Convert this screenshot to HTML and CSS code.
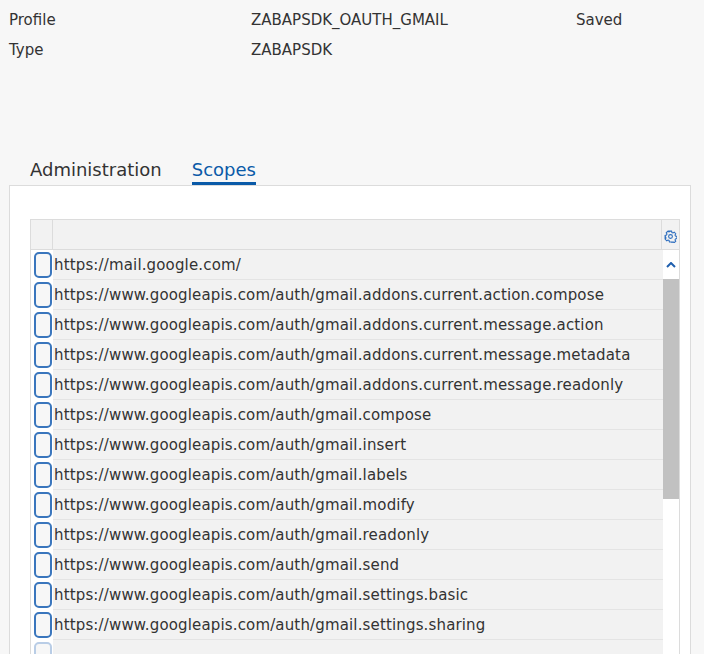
FILE: index.html
```html
<!DOCTYPE html>
<html>
<head>
<meta charset="utf-8">
<link rel="stylesheet" href="styles.css">
</head>
<body>
<div class="top">
  <div class="info">
    <div>Profile</div><div>ZABAPSDK_OAUTH_GMAIL</div><div>Saved</div>
    <div>Type</div><div>ZABAPSDK</div><div></div>
  </div>
</div>
<div class="tabs">
  <div class="tab">Administration</div>
  <div class="tab active">Scopes</div>
</div>
<div class="panel">
  <div class="table">
    <div class="thead">
      <div class="sel-h"></div>
      <div class="col-h"></div>
      <div class="gear-h">
        <svg width="13" height="13" viewBox="0 0 24 24" fill="none" stroke="#2f6fbf" stroke-width="2"><path d="M10 2h4l.6 2.6 2 .9 2.3-1.4 2.8 2.8-1.4 2.3.9 2 2.6.6v4l-2.6.6-.9 2 1.4 2.3-2.8 2.8-2.3-1.4-2 .9L14 22h-4l-.6-2.6-2-.9-2.3 1.4-2.8-2.8 1.4-2.3-.9-2L2 14v-4l2.6-.6.9-2-1.4-2.3 2.8-2.8 2.3 1.4 2-.9z"/><circle cx="12" cy="12" r="3.5"/></svg>
      </div>
    </div>
    <div class="tbody">
      <div class="rows">
        <div class="row"><span class="cb"></span><span class="cell">https://mail.google.com/</span></div>
        <div class="row"><span class="cb"></span><span class="cell">https://www.googleapis.com/auth/gmail.addons.current.action.compose</span></div>
        <div class="row"><span class="cb"></span><span class="cell">https://www.googleapis.com/auth/gmail.addons.current.message.action</span></div>
        <div class="row"><span class="cb"></span><span class="cell">https://www.googleapis.com/auth/gmail.addons.current.message.metadata</span></div>
        <div class="row"><span class="cb"></span><span class="cell">https://www.googleapis.com/auth/gmail.addons.current.message.readonly</span></div>
        <div class="row"><span class="cb"></span><span class="cell">https://www.googleapis.com/auth/gmail.compose</span></div>
        <div class="row"><span class="cb"></span><span class="cell">https://www.googleapis.com/auth/gmail.insert</span></div>
        <div class="row"><span class="cb"></span><span class="cell">https://www.googleapis.com/auth/gmail.labels</span></div>
        <div class="row"><span class="cb"></span><span class="cell">https://www.googleapis.com/auth/gmail.modify</span></div>
        <div class="row"><span class="cb"></span><span class="cell">https://www.googleapis.com/auth/gmail.readonly</span></div>
        <div class="row"><span class="cb"></span><span class="cell">https://www.googleapis.com/auth/gmail.send</span></div>
        <div class="row"><span class="cb"></span><span class="cell">https://www.googleapis.com/auth/gmail.settings.basic</span></div>
        <div class="row"><span class="cb"></span><span class="cell">https://www.googleapis.com/auth/gmail.settings.sharing</span></div>
        <div class="row"><span class="cb faded"></span><span class="cell"></span></div>
      </div>
      <div class="scroll">
        <div class="arrow">
          <svg width="10" height="6" viewBox="0 0 10 6" fill="none" stroke="#1f5fae" stroke-width="2"><path d="M1 5l4-4 4 4"/></svg>
        </div>
        <div class="thumb"></div>
      </div>
    </div>
  </div>
</div>
</body>
</html>
```
FILE: styles.css
```css
html, body {
  margin: 0;
  padding: 0;
  background: #f7f7f7;
  font-family: "DejaVu Sans", sans-serif;
  color: #333;
  overflow: hidden;
  height: 654px;
}
.top {
  padding: 5px 0 0 9px;
  height: 151px;
  box-sizing: border-box;
}
.info {
  display: grid;
  grid-template-columns: 242px 325px auto;
  grid-auto-rows: 30px;
  align-items: center;
  font-size: 15px;
}
.tabs {
  display: flex;
  gap: 30px;
  padding-left: 30px;
  height: 34px;
  box-sizing: border-box;
}
.tab {
  font-size: 18px;
  line-height: 25px;
  padding-top: 6px;
  color: #333;
  height: 34px;
  box-sizing: border-box;
}
.tab.active {
  color: #0a5aa8;
  border-bottom: 3px solid #0a5aa8;
}
.panel {
  margin-left: 9px;
  width: 682px;
  height: 480px;
  box-sizing: border-box;
  background: #fff;
  border: 1px solid #dcdcdc;
  border-bottom: none;
  padding: 33px 0 0 20px;
}
.table {
  width: 650px;
  border: 1px solid #dcdcdc;
  border-bottom: none;
  box-sizing: border-box;
}
.thead {
  display: flex;
  height: 30px;
  background: #f2f2f2;
  border-bottom: 1px solid #dcdcdc;
  box-sizing: border-box;
}
.sel-h {
  width: 21px;
  border-right: 1px solid #dcdcdc;
}
.col-h {
  flex: 1;
  border-right: 1px solid #dcdcdc;
}
.gear-h {
  width: 17px;
  display: flex;
  align-items: center;
  justify-content: center;
  padding-top: 3px;
}
.tbody {
  display: flex;
}
.rows {
  flex: 1;
}
.row {
  display: flex;
  height: 30px;
  align-items: stretch;
}
.cb {
  width: 22px;
  box-sizing: border-box;
  padding: 2px 0;
  display: flex;
  justify-content: center;
  background: #fff;
}
.cb::before {
  content: "";
  display: block;
  width: 18px;
  height: 26px;
  box-sizing: border-box;
  border: 2px solid #3a76bd;
  border-radius: 5px;
  background: #f7f7f7;
  margin-left: 1px;
}
.cb.faded::before {
  border-color: #b9cde6;
}
.cell {
  flex: 1;
  background: #f2f2f2;
  border-bottom: 1px solid #e4e4e4;
  font-size: 15px;
  letter-spacing: 0.15px;
  line-height: 31px;
  padding-left: 1px;
  white-space: nowrap;
  overflow: hidden;
}
.scroll {
  width: 16px;
  background: #fff;
  display: flex;
  flex-direction: column;
  align-items: center;
}
.arrow {
  height: 29px;
  display: flex;
  align-items: center;
  justify-content: center;
}
.thumb {
  width: 16px;
  height: 220px;
  background: #c1c1c1;
}
```
